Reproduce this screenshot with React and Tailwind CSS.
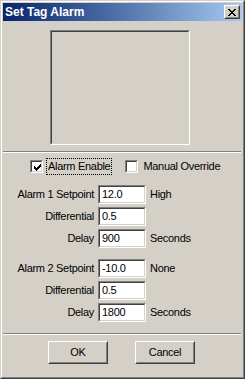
import React from "react";

// Classic Win2000-style "Set Tag Alarm" dialog
const font = { fontFamily: '"Liberation Sans", Arial, sans-serif' };

const Sunken = ({ className = "", children }) => (
  <div className={`border border-t-[#808080] border-l-[#808080] border-r-white border-b-white ${className}`}>
    <div className="h-full w-full border border-t-[#404040] border-l-[#404040] border-r-[#d4d0c8] border-b-[#d4d0c8]">
      {children}
    </div>
  </div>
);

const Raised = ({ className = "", children }) => (
  <div className={`border border-t-white border-l-white border-r-[#404040] border-b-[#404040] ${className}`}>
    <div className="flex h-full w-full items-center justify-center border border-t-[#d4d0c8] border-l-[#d4d0c8] border-r-[#808080] border-b-[#808080]">
      {children}
    </div>
  </div>
);

const Checkbox = ({ checked }) => (
  <Sunken className="h-[13px] w-[13px] shrink-0">
    <div className="h-full w-full bg-white">
      {checked && (
        <svg width="11" height="11" viewBox="0 0 11 11" shapeRendering="crispEdges">
          <path d="M2 4h1v3H2zM3 5h1v3H3zM4 6h1v3H4zM5 5h1v3H5zM6 4h1v3H6zM7 3h1v3H7zM8 2h1v3H8z" fill="#000" />
        </svg>
      )}
    </div>
  </Sunken>
);

const Separator = () => (
  <div className="w-[238px]">
    <div className="h-px bg-[#808080]" />
    <div className="h-px bg-white" />
  </div>
);

const Row = ({ label, value, unit }) => (
  <div className="flex h-[19px] items-center">
    <div className="w-[91px] text-right">{label}</div>
    <Sunken className="ml-[4px] h-[19px] w-[48px]">
      <div className="flex h-full items-center bg-white pl-[2px] leading-none">{value}</div>
    </Sunken>
    <div className="ml-[4px]">{unit}</div>
  </div>
);

export default function App() {
  return (
    <div className="h-[379px] w-[245px] bg-[#d4d0c8] text-[11px] tracking-[-0.3px] text-black" style={font}>
      <div className="h-full w-full border border-t-[#d4d0c8] border-l-[#d4d0c8] border-r-[#404040] border-b-[#404040]">
        <div className="h-full w-full border border-t-white border-l-white border-r-[#808080] border-b-[#808080] p-px">
          {/* Title bar */}
          <div className="flex h-[18px] items-center justify-between bg-gradient-to-r from-[#0a246a] to-[#a6caf0] pl-[2px] pr-[2px]">
            <span className="text-[12px] font-bold leading-none tracking-normal text-white">Set Tag Alarm</span>
            <Raised className="h-[14px] w-[16px] bg-[#d4d0c8]">
              <svg width="8" height="7" viewBox="0 0 8 7" shapeRendering="crispEdges">
                <path d="M0 0h2v1h1v1h2V1h1V0h2v1H7v1H6v1H5v1h1v1h1v1h1v1H6V6H5V5H3v1H2v1H0V6h1V5h1V4h1V3H2V2H1V1H0z" fill="#000" />
              </svg>
            </Raised>
          </div>

          {/* Picture frame */}
          <div className="mt-[9px] pl-[47px]">
            <Sunken className="h-[115px] w-[140px]" />
          </div>

          <div className="mt-[6px]">
            <Separator />
          </div>

          {/* Checkboxes */}
          <div className="mt-[7px] flex h-[13px] items-center pl-[27px]">
            <Checkbox checked />
            <div className="ml-[3px] flex h-[17px] items-center border border-dotted border-black px-px">Alarm Enable</div>
            <div className="ml-[13px] flex items-center">
              <Checkbox />
              <span className="ml-[5px]">Manual Override</span>
            </div>
          </div>

          {/* Alarm 1 */}
          <div className="mt-[12px] flex flex-col gap-[3px]">
            <Row label="Alarm 1 Setpoint" value="12.0" unit="High" />
            <Row label="Differential" value="0.5" />
            <Row label="Delay" value="900" unit="Seconds" />
          </div>

          {/* Alarm 2 */}
          <div className="mt-[11px] flex flex-col gap-[3px]">
            <Row label="Alarm 2 Setpoint" value="-10.0" unit="None" />
            <Row label="Differential" value="0.5" />
            <Row label="Delay" value="1800" unit="Seconds" />
          </div>

          <div className="mt-[11px]">
            <Separator />
          </div>

          {/* Buttons */}
          <div className="mt-[6px] flex pl-[45px]">
            <Raised className="h-[23px] w-[60px]">OK</Raised>
            <Raised className="ml-[27px] h-[23px] w-[60px]">Cancel</Raised>
          </div>
        </div>
      </div>
    </div>
  );
}
